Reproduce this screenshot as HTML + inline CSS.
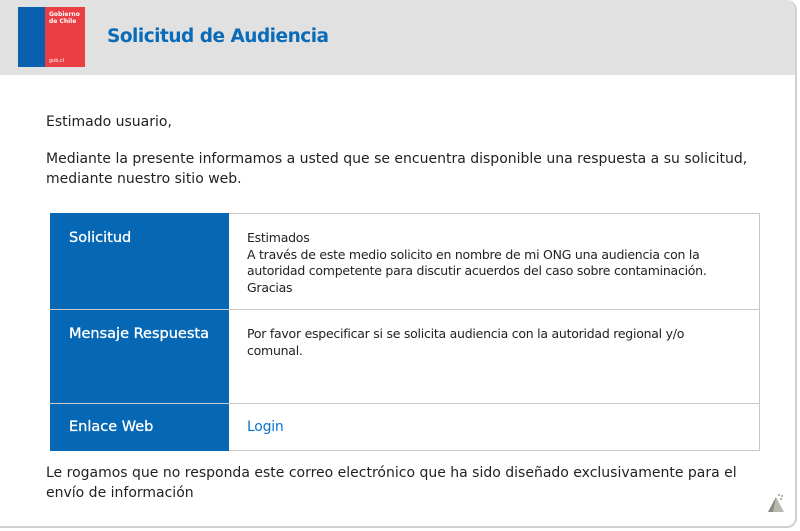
<!DOCTYPE html>
<html><head><meta charset="utf-8"><style>
*{margin:0;padding:0;box-sizing:border-box}
body{width:800px;height:531px;background:#fff;font-family:"DejaVu Sans",Verdana,sans-serif;color:#222;overflow:hidden;position:relative}
.card{position:absolute;left:0;top:0;width:797px;height:528px;border-right:2px solid #d0d0d0;border-bottom:2px solid #d0d0d0;border-radius:0 10px 10px 0;overflow:hidden}
.hdr{position:absolute;left:0;top:0;width:800px;height:75px;background:#e1e1e1;border-radius:0 10px 0 0}
.logo{position:absolute;left:18px;top:7px;width:67px;height:60px}
.logo .b{position:absolute;left:0;top:0;width:27px;height:60px;background:#0a5fae}
.logo .r{position:absolute;left:27px;top:0;width:40px;height:60px;background:#ea3e43;color:#fff;font-size:6px;font-weight:bold;line-height:7px;padding:4px 0 0 4px}
.logo .g{position:absolute;left:31px;bottom:3px;font-size:5px;color:#fff}
.title{position:absolute;left:107px;top:26px;font-size:18.5px;font-weight:bold;color:#0a6bb8;letter-spacing:-0.5px}
.t{position:absolute;left:46px;font-size:14px;line-height:20px;white-space:nowrap}
table{position:absolute;left:50px;top:213px;width:710px;border-collapse:collapse;table-layout:fixed}
td{border:1px solid #c8c8c8;vertical-align:top;overflow:hidden}
td.l{background:#0667b5;color:#fff;font-size:14.5px;width:178px;padding:16px 0 0 18px;border-color:#0667b5;border-bottom:1px solid #c8c8c8;white-space:nowrap;-webkit-text-stroke:0.3px #fff}
td.v{font-size:12.5px;line-height:16.5px;padding:16px 0 0 18px;letter-spacing:-0.25px;white-space:nowrap}
a{color:#0a73d0;text-decoration:none;font-size:14px}
</style></head><body>
<div class="card">
<div class="hdr">
<div class="logo"><div class="b"></div><div class="r">Gobierno<br>de Chile</div><div class="g">gob.cl</div></div>
<div class="title">Solicitud de Audiencia</div>
</div>
<div class="t" style="top:112px">Estimado usuario,</div>
<div class="t" style="top:149px">Mediante la presente informamos a usted que se encuentra disponible una respuesta a su solicitud,<br>mediante nuestro sitio web.</div>
<table>
<tr style="height:96px"><td class="l">Solicitud</td><td class="v">Estimados<br>A través de este medio solicito en nombre de mi ONG una audiencia con la<br>autoridad competente para discutir acuerdos del caso sobre contaminación.<br>Gracias</td></tr>
<tr style="height:94px"><td class="l">Mensaje Respuesta</td><td class="v">Por favor especificar si se solicita audiencia con la autoridad regional y/o<br>comunal.</td></tr>
<tr style="height:47px"><td class="l" style="padding-top:15px;border-bottom-color:#0667b5">Enlace Web</td><td class="v" style="padding-top:15px"><a>Login</a></td></tr>
</table>
<div class="t" style="top:463px">Le rogamos que no responda este correo electrónico que ha sido diseñado exclusivamente para el<br>envío de información</div>
<svg style="position:absolute;left:767px;top:493px" width="18" height="20"><polygon points="1,19 9,4 17,19" fill="#b9b9b0"/><polygon points="1,19 9,4 6,19" fill="#8a8a80"/><circle cx="12" cy="2" r="1" fill="#999"/><circle cx="15" cy="3" r="1" fill="#999"/><circle cx="14" cy="6" r="1" fill="#999"/></svg>
</div>
</body></html>
